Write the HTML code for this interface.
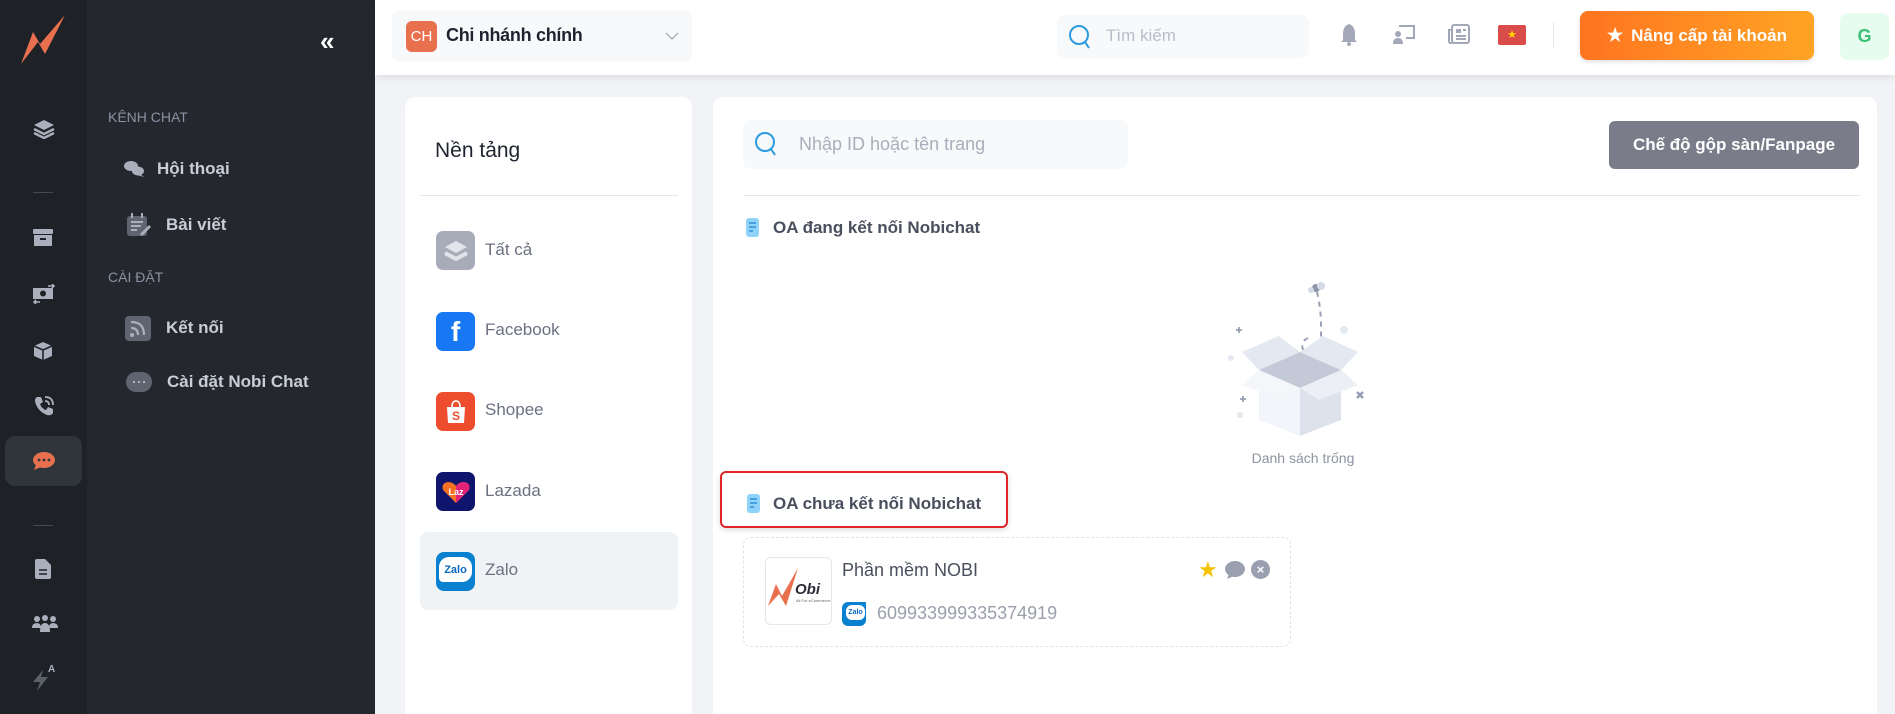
<!DOCTYPE html>
<html><head><meta charset="utf-8">
<style>
*{margin:0;padding:0;box-sizing:border-box}
html,body{width:1895px;height:714px;overflow:hidden}
body{background:#f1f3f6;font-family:"Liberation Sans",Arial,sans-serif;position:relative}
.abs{position:absolute}
.rail{left:0;top:0;width:87px;height:714px;background:#1e2227}
.side{left:87px;top:0;width:288px;height:714px;background:#24282e}
.hdr{left:375px;top:0;width:1520px;height:75px;background:#fff;box-shadow:0 3px 8px rgba(0,0,0,.08)}
.sec{color:#8a93a3;font-size:14px;left:108px}
.mi{color:#c9ced6;font-size:17px;font-weight:bold}
.card{background:#fff;border-radius:10px 10px 0 0}
.pl{position:absolute;left:436px;width:39px;height:39px;border-radius:7px;display:flex;align-items:center;justify-content:center;color:#fff;font-weight:bold}
.pt{position:absolute;left:485px;font-size:17px;color:#6b7180}
</style></head><body>
<div class="abs rail"></div>
<div class="abs side"></div>
<!-- logo -->
<svg class="abs" style="left:20px;top:14px" width="46" height="52" viewBox="0 0 46 52"><path d="M1 50 L13 18 L20 30 L45 1 L25 40 L18 28 Z" fill="#e8704f"/></svg>
<!-- rail icons -->
<svg class="abs" style="left:33px;top:119px" width="22" height="20" viewBox="0 0 22 20"><path d="M11 1 L21 6 L11 11 L1 6Z" fill="#a9afbd"/><path d="M1 10 L11 15 L21 10" stroke="#a9afbd" stroke-width="2.4" fill="none"/><path d="M1 14 L11 19 L21 14" stroke="#a9afbd" stroke-width="2.4" fill="none"/></svg>
<div class="abs" style="left:33px;top:192px;width:20px;height:1px;background:#444a52"></div>
<svg class="abs" style="left:33px;top:229px" width="20" height="18"><rect x="0" y="0" width="20" height="5" rx="1" fill="#a9afbd"/><rect x="1" y="6" width="18" height="11" fill="#a9afbd"/><rect x="7" y="9" width="6" height="2" fill="#1e2227"/></svg>
<svg class="abs" style="left:32px;top:284px" width="24" height="20"><rect x="1" y="4" width="20" height="11" fill="#a9afbd"/><circle cx="11" cy="9.5" r="3" fill="#1e2227"/><path d="M16 2h6M20 0l2 2-2 2M2 18h6M4 16l-2 2 2 2" stroke="#a9afbd" stroke-width="1.6" fill="none"/></svg>
<svg class="abs" style="left:33px;top:341px" width="20" height="20" viewBox="0 0 20 20"><path d="M10 1 L19 5 L19 15 L10 19 L1 15 L1 5Z" fill="#a9afbd"/><path d="M1 5 L10 9 L19 5 M10 9 V19" stroke="#1e2227" stroke-width="1.6" fill="none"/></svg>
<svg class="abs" style="left:33px;top:395px" width="22" height="22" viewBox="0 0 22 22"><path d="M4 2 L8 2 L10 7 L7 9 Q9 14 13 15 L15 12 L20 14 L20 18 Q18 21 14 20 Q4 16 2 6 Q2 3 4 2Z" fill="#a9afbd"/><path d="M12 6 Q16 6 16 10 M12 2 Q20 2 20 10" stroke="#a9afbd" stroke-width="1.8" fill="none"/></svg>
<div class="abs" style="left:5px;top:436px;width:77px;height:50px;background:#30353c;border-radius:10px"></div>
<svg class="abs" style="left:32px;top:451px" width="24" height="20" viewBox="0 0 24 20"><ellipse cx="12" cy="9" rx="11" ry="8" fill="#e8704f"/><path d="M4 14 L2 19 L9 16Z" fill="#e8704f"/><circle cx="7" cy="9" r="1.4" fill="#30353c"/><circle cx="12" cy="9" r="1.4" fill="#30353c"/><circle cx="17" cy="9" r="1.4" fill="#30353c"/></svg>
<div class="abs" style="left:33px;top:525px;width:20px;height:1px;background:#444a52"></div>
<svg class="abs" style="left:35px;top:559px" width="16" height="20"><path d="M0 2 Q0 0 2 0 L10 0 L16 6 L16 18 Q16 20 14 20 L2 20 Q0 20 0 18Z" fill="#a9afbd"/><path d="M4 11h8M4 15h8" stroke="#1e2227" stroke-width="1.5"/></svg>
<svg class="abs" style="left:32px;top:615px" width="26" height="18" viewBox="0 0 26 18"><circle cx="5" cy="4" r="3" fill="#a9afbd"/><circle cx="13" cy="3" r="3" fill="#a9afbd"/><circle cx="21" cy="4" r="3" fill="#a9afbd"/><path d="M0 13 Q0 8 5 8 Q9 8 9 13Z M8 17 Q8 8 13 8 Q18 8 18 17Z M17 13 Q17 8 21 8 Q26 8 26 13Z" fill="#a9afbd"/></svg>
<svg class="abs" style="left:31px;top:662px" width="28" height="30" viewBox="0 0 28 30"><path d="M12 8 L2 20 L9 20 L6 29 L17 15 L10 15Z" fill="#5b616b"/><text x="17" y="10" font-size="10" font-weight="bold" fill="#a9afbd" font-family="Liberation Sans">A</text></svg>
<!-- side -->
<div class="abs" style="left:320px;top:26px;color:#fff;font-size:26px;font-weight:bold;letter-spacing:-4px">«</div>
<div class="abs sec" style="top:109px">KÊNH CHAT</div>
<svg class="abs" style="left:123px;top:160px" width="22" height="18" viewBox="0 0 22 18"><ellipse cx="8" cy="6" rx="7" ry="5" fill="#a9afbd"/><ellipse cx="15" cy="11" rx="6" ry="4.5" fill="#a9afbd"/><path d="M17 14 L21 17 L14 15Z" fill="#a9afbd"/></svg>
<div class="abs mi" style="left:157px;top:159px">Hội thoại</div>
<svg class="abs" style="left:127px;top:213px" width="24" height="24" viewBox="0 0 24 24"><rect x="0" y="3" width="20" height="20" rx="3" fill="#5f6570"/><path d="M5 0v5M15 0v5" stroke="#a9afbd" stroke-width="2"/><path d="M4 9h12M4 13h10M4 17h6" stroke="#a9afbd" stroke-width="2"/><path d="M13 21 L22 12 L24 14 L15 23Z" fill="#a9afbd"/></svg>
<div class="abs mi" style="left:166px;top:215px">Bài viết</div>
<div class="abs sec" style="top:269px">CÀI ĐẶT</div>
<svg class="abs" style="left:125px;top:316px" width="26" height="25" viewBox="0 0 26 25"><rect width="26" height="25" rx="4" fill="#5f6570"/><circle cx="7" cy="19" r="2" fill="#a9afbd"/><path d="M6 12 Q13 12 13 19 M6 6 Q19 6 19 19" stroke="#a9afbd" stroke-width="2.2" fill="none"/></svg>
<div class="abs mi" style="left:166px;top:318px">Kết nối</div>
<svg class="abs" style="left:126px;top:372px" width="26" height="20" viewBox="0 0 26 20"><rect width="26" height="20" rx="10" fill="#5f6570"/><circle cx="8" cy="10" r="1" fill="#c9ced6"/><circle cx="13" cy="10" r="1" fill="#c9ced6"/><circle cx="18" cy="10" r="1" fill="#c9ced6"/></svg>
<div class="abs mi" style="left:167px;top:372px">Cài đặt Nobi Chat</div>
<!-- header -->
<div class="abs hdr"></div>
<div class="abs" style="left:392px;top:10px;width:300px;height:52px;background:#f8f9fb;border-radius:8px"></div>
<div class="abs" style="left:406px;top:21px;width:31px;height:31px;background:#e8704f;border-radius:6px;color:#fff;font-size:15px;display:flex;align-items:center;justify-content:center">CH</div>
<div class="abs" style="left:446px;top:25px;font-size:18px;color:#1f2330;font-weight:bold;letter-spacing:-0.3px">Chi nhánh chính</div>
<svg class="abs" style="left:665px;top:32px" width="14" height="9"><path d="M1 1 L7 7 L13 1" stroke="#a9afbd" stroke-width="1.4" fill="none"/></svg>
<div class="abs" style="left:1057px;top:15px;width:252px;height:43px;background:#f7f9fb;border-radius:8px"></div>
<svg class="abs" style="left:1068px;top:24px" width="24" height="26"><circle cx="11" cy="11" r="9" stroke="#2b9be0" stroke-width="2" fill="none"/><path d="M17 18 L21 24" stroke="#2b9be0" stroke-width="2"/></svg>
<div class="abs" style="left:1106px;top:26px;font-size:17px;color:#b8bec8">Tìm kiếm</div>
<svg class="abs" style="left:1340px;top:24px" width="18" height="22" viewBox="0 0 18 22"><path d="M9 0 Q3 2 3 10 L3 16 L1 18 L17 18 L15 16 L15 10 Q15 2 9 0Z" fill="#a3a8b8"/><circle cx="9" cy="20" r="2" fill="#a3a8b8"/></svg>
<svg class="abs" style="left:1393px;top:24px" width="22" height="20" viewBox="0 0 22 20"><path d="M6 2h15v12h-8" stroke="#a3a8b8" stroke-width="2" fill="none"/><circle cx="5" cy="10" r="3" fill="#a3a8b8"/><path d="M0 20 Q0 14 5 14 Q10 14 10 20Z" fill="#a3a8b8"/></svg>
<svg class="abs" style="left:1448px;top:24px" width="22" height="20" viewBox="0 0 22 20"><rect x="4" y="1" width="17" height="18" rx="2" fill="none" stroke="#a3a8b8" stroke-width="2"/><path d="M4 6H1v11a2 2 0 0 0 3 2" stroke="#a3a8b8" stroke-width="2" fill="none"/><rect x="8" y="5" width="5" height="4" fill="#a3a8b8"/><path d="M15 6h3M8 12h10M8 15h10" stroke="#a3a8b8" stroke-width="2"/></svg>
<div class="abs" style="left:1498px;top:25px;width:28px;height:20px;background:#d94c4a;border-radius:2px;color:#ffd400;font-size:11px;text-align:center;line-height:20px">★</div>
<div class="abs" style="left:1553px;top:22px;width:1px;height:26px;background:#e3e6ea"></div>
<div class="abs" style="left:1580px;top:11px;width:234px;height:49px;border-radius:8px;background:linear-gradient(90deg,#ff7420,#ffa424);box-shadow:0 2px 4px rgba(0,0,0,.12);color:#fff;font-weight:bold;font-size:17px;display:flex;align-items:center;justify-content:center"><span style="font-size:18px;margin-right:8px">★</span>Nâng cấp tài khoản</div>
<div class="abs" style="left:1840px;top:13px;width:49px;height:47px;background:#e6fcee;border-radius:8px;color:#3cbf78;font-weight:bold;font-size:18px;display:flex;align-items:center;justify-content:center">G</div>
<!-- left card -->
<div class="abs card" style="left:405px;top:97px;width:287px;height:617px"></div>
<div class="abs" style="left:435px;top:139px;font-size:21px;color:#1f2330">Nền tảng</div>
<div class="abs" style="left:420px;top:195px;width:258px;height:1px;background:#e4e7eb"></div>
<div class="abs" style="left:420px;top:532px;width:258px;height:78px;background:#f0f3f6;border-radius:8px"></div>
<div class="pl" style="top:231px;background:#a8acb9"><svg width="26" height="24" viewBox="0 0 26 24"><path d="M13 2 L24 8 L13 14 L2 8Z" fill="#e2e4ea"/><path d="M2 14 L13 20 L24 14" stroke="#e2e4ea" stroke-width="4" fill="none"/></svg></div>
<div class="pt" style="top:240px">Tất cả</div>
<div class="pl" style="top:312px;background:#1877f2;font-size:28px;font-family:'Liberation Sans'">f</div>
<div class="pt" style="top:320px">Facebook</div>
<div class="pl" style="top:392px;background:#ee4d2d"><svg width="22" height="26" viewBox="0 0 22 26"><path d="M7 8 Q7 2 11 2 Q15 2 15 8" stroke="#fff" stroke-width="1.6" fill="none"/><path d="M2 8 H20 L19 24 H3Z" fill="#fff"/><text x="11" y="21" font-size="12" fill="#ee4d2d" text-anchor="middle" font-family="Liberation Sans">S</text></svg></div>
<div class="pt" style="top:400px">Shopee</div>
<div class="pl" style="top:472px;background:#0f146d"><svg width="30" height="24" viewBox="0 0 30 24"><path d="M15 23 L2 10 Q0 3 7 2 Q12 2 15 6 Q18 2 23 2 Q30 3 28 10Z" fill="#f36f21"/><path d="M15 23 L28 10 Q30 3 23 2 Q18 2 15 6Z" fill="#e3237a"/><text x="15" y="15" font-size="9" font-weight="bold" fill="#fff" text-anchor="middle" font-family="Liberation Sans">Laz</text></svg></div>
<div class="pt" style="top:481px">Lazada</div>
<div class="pl" style="top:552px;background:#0a80d0;border-radius:8px"><div style="width:33px;height:25px;background:#fff;border-radius:10px 10px 10px 4px;color:#0a68c0;font-size:11px;font-weight:bold;display:flex;align-items:center;justify-content:center;margin-top:-4px">Zalo</div></div>
<div class="pt" style="top:560px">Zalo</div>
<!-- right card -->
<div class="abs card" style="left:713px;top:97px;width:1164px;height:617px"></div>
<div class="abs" style="left:743px;top:120px;width:385px;height:49px;background:#f7f9fb;border-radius:8px"></div>
<svg class="abs" style="left:754px;top:131px" width="24" height="27"><circle cx="11" cy="11" r="9" stroke="#2b9be0" stroke-width="2" fill="none"/><path d="M17 18 L21 24" stroke="#2b9be0" stroke-width="2"/></svg>
<div class="abs" style="left:799px;top:134px;font-size:18px;color:#a9afba">Nhập ID hoặc tên trang</div>
<div class="abs" style="left:1609px;top:121px;width:250px;height:48px;background:#7a7c89;border-radius:6px;color:#fff;font-size:17px;font-weight:bold;display:flex;align-items:center;justify-content:center">Chế độ gộp sàn/Fanpage</div>
<div class="abs" style="left:743px;top:195px;width:1116px;height:1px;background:#e4e7eb"></div>
<svg class="abs" style="left:746px;top:218px" width="13" height="19"><rect width="13" height="19" rx="3" fill="#8fd3fb"/><path d="M3 5h7M3 9h7M3 13h4" stroke="#2b8fd6" stroke-width="1.4"/></svg>
<div class="abs" style="left:773px;top:218px;font-size:17px;font-weight:bold;color:#4a4f5e">OA đang kết nối Nobichat</div>
<!-- empty box -->
<svg class="abs" style="left:1224px;top:280px" width="170" height="160" viewBox="0 0 170 160">
<circle cx="92" cy="8" r="4" fill="#8d93a8"/><circle cx="97" cy="6" r="4" fill="#d5dbe6"/><circle cx="87" cy="10" r="3" fill="#d5dbe6"/>
<path d="M93 12 Q100 40 95 80 M84 58 Q75 62 80 72" stroke="#9aa0b4" stroke-width="2" stroke-dasharray="5 5" fill="none"/>
<path d="M12 50h6M15 47v6M16 119h6M19 116v6" stroke="#9aa0b4" stroke-width="1.8"/>
<circle cx="120" cy="50" r="4" fill="#e3e8f1"/><circle cx="7" cy="78" r="3" fill="#e3e8f1"/><circle cx="16" cy="135" r="3" fill="#e3e8f1"/>
<path d="M133 112 l6 6 M139 112 l-6 6" stroke="#9aa0b4" stroke-width="2.5"/>
<path d="M35 90 L76 72 L117 90 L76 108Z" fill="#c3c9d6"/>
<path d="M35 90 L76 108 L76 156 L35 140Z" fill="#f2f5fa"/>
<path d="M117 90 L76 108 L76 156 L117 140Z" fill="#dde2ec"/>
<path d="M35 90 L18 72 L55 56 L76 72Z" fill="#e4e8f0"/>
<path d="M117 90 L134 72 L99 56 L76 72Z" fill="#e4e8f0"/>
<path d="M35 90 L18 105 L58 120 L76 108Z" fill="#f4f6fa"/>
<path d="M117 90 L134 105 L95 120 L76 108Z" fill="#eceff5"/>
</svg>
<div class="abs" style="left:1243px;top:450px;font-size:14px;color:#8d93a0;width:120px;text-align:center">Danh sách trống</div>
<!-- red box -->
<div class="abs" style="left:720px;top:471px;width:288px;height:57px;border:2px solid #e0262b;border-radius:6px;box-shadow:0 2px 6px rgba(0,0,0,.15)"></div>
<svg class="abs" style="left:747px;top:494px" width="13" height="19"><rect width="13" height="19" rx="3" fill="#8fd3fb"/><path d="M3 5h7M3 9h7M3 13h4" stroke="#2b8fd6" stroke-width="1.4"/></svg>
<div class="abs" style="left:773px;top:494px;font-size:17px;font-weight:bold;color:#4a4f5e">OA chưa kết nối Nobichat</div>
<!-- OA card -->
<div class="abs" style="left:743px;top:537px;width:548px;height:110px;border:1px dashed #dfe2e7;border-radius:8px"></div>
<div class="abs" style="left:765px;top:557px;width:67px;height:68px;border:1px solid #e4e6ea;border-radius:6px;background:#fff"></div>
<svg class="abs" style="left:766px;top:566px" width="66" height="50" viewBox="0 0 66 50"><path d="M2 40 L10 18 L16 30 L32 2 L20 40 L13 28Z" fill="#e8704f"/><text x="29" y="28" font-size="15" font-weight="bold" font-style="italic" fill="#2d2d3a" font-family="Liberation Sans">Obi</text><text x="30" y="36" font-size="4" fill="#666" font-family="Liberation Sans">All For eCommerce</text></svg>
<div class="abs" style="left:842px;top:560px;font-size:18px;color:#4a4f5e">Phần mềm NOBI</div>
<div class="abs" style="left:842px;top:602px;width:24px;height:24px;background:#0a80d0;border-radius:6px 0 6px 6px"><div style="margin:3px 0 0 4px;width:19px;height:15px;background:#fff;border-radius:6px;color:#0a68c0;font-size:7px;font-weight:bold;text-align:center;line-height:15px">Zalo</div></div>
<div class="abs" style="left:877px;top:603px;font-size:18px;color:#9aa0ab">609933999335374919</div>
<div class="abs" style="left:1198px;top:557px;font-size:22px;color:#f5c400">★</div>
<svg class="abs" style="left:1224px;top:560px" width="22" height="20" viewBox="0 0 22 20"><ellipse cx="11" cy="9" rx="10" ry="8" fill="#9aa0b0"/><path d="M5 14 L3 19 L10 16Z" fill="#9aa0b0"/></svg>
<div class="abs" style="left:1251px;top:560px;width:19px;height:19px;border-radius:50%;background:#9aa0b0;color:#fff;font-size:13px;font-weight:bold;text-align:center;line-height:19px">×</div>
</body></html>
